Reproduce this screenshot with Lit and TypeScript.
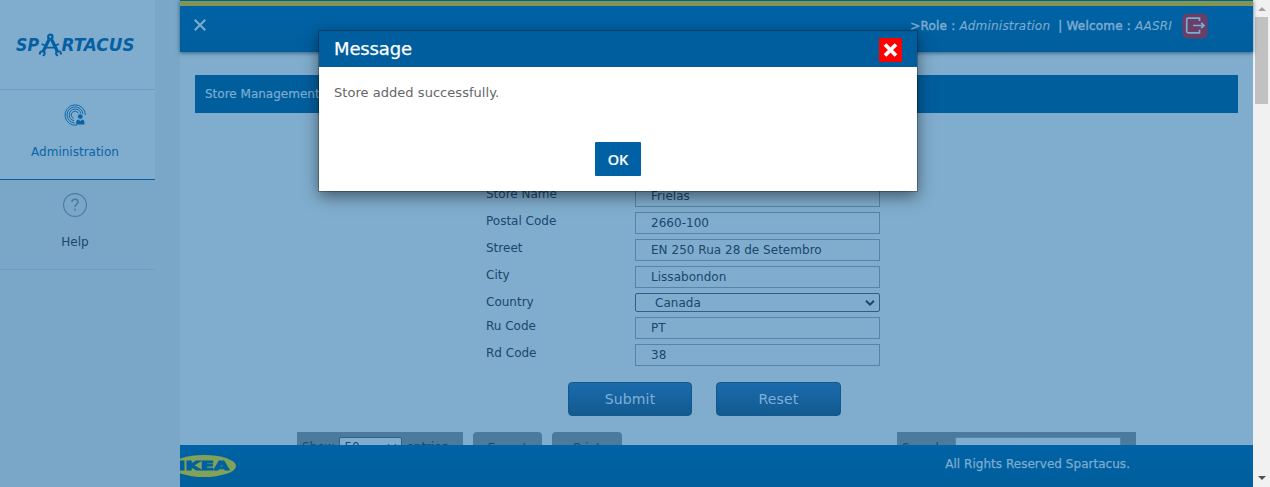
import { LitElement, html, css } from "lit";
import { customElement } from "lit/decorators.js";

type Field = { label: string; value: string; kind?: "select" };

const FIELDS: Field[] = [
  { label: "Store Name", value: "Frielas" },
  { label: "Postal Code", value: "2660-100" },
  { label: "Street", value: "EN 250 Rua 28 de Setembro" },
  { label: "City", value: "Lissabondon" },
  { label: "Country", value: "Canada", kind: "select" },
  { label: "Ru Code", value: "PT" },
  { label: "Rd Code", value: "38" },
];

@customElement("side-nav")
class SideNav extends LitElement {
  static styles = css`
    :host { display: block; width: 180px; background: #7aa7c7; color: #19476d; }
    .inner { width: 155px; }
    .logo { box-sizing: border-box; height: 90px; background: #80adcd; border-bottom: 1px solid #6f9dbf; padding: 31px 0 0 15px; }
    .logo svg { display: block; }
    .item { box-sizing: border-box; height: 90px; display: flex; flex-direction: column; align-items: center; border-bottom: 1px solid #6f9dbf; padding: 13px 5px 0 0; gap: 17px; line-height: 16px; }
    .item svg { display: block; }
    .active { background: #80adcd; color: #0a63a7; border-color: #0560a4; }
    .word { font: italic bold 17px "DejaVu Sans", sans-serif; fill: #0560a3; }
  `;
  render() {
    return html`<div class="inner">
      <div class="logo">
        <svg width="125" height="28" viewBox="0 0 125 28">
          <text class="word" x="1" y="20" textLength="23" lengthAdjust="spacingAndGlyphs">SP</text>
          <text class="word" x="46.5" y="20" textLength="73" lengthAdjust="spacingAndGlyphs">RTACUS</text>
          <g fill="none" stroke="#0560a3">
            <circle cx="35.3" cy="5.8" r="2.2" stroke-width="2.2" />
            <path d="M34 8.5L28.2 20.5M36.6 8.5l5.8 12" stroke-width="3.2" />
            <path d="M30 16.6h11M26.6 13l4 1.6M44 13l-4 1.6" stroke-width="1.8" />
            <path d="M25 23.6q-.8-3 2.4-3.4 3 .4 2.2 2.8l-1.4 2M45.8 23.6q.8-3-2.4-3.4-3 .4-2.2 2.8l1.4 2" stroke-width="2.1" />
          </g>
        </svg>
      </div>
      <div class="item active">
        <svg width="24" height="24" viewBox="0 0 24 24">
          <g fill="none" stroke="#0a63a7" stroke-width=".95">
            <path d="M14 22.1A10.2 10.2 0 1 1 22.4 12" />
            <path d="M11.5 19.9A8 8 0 1 1 20 11" />
            <path d="M11 17.6A5.8 5.8 0 1 1 17.8 10.5" />
            <path d="M10.5 15.3A3.7 3.7 0 1 1 15.4 10.4" />
          </g>
          <circle cx="17.3" cy="13.6" r="2.4" fill="#0a63a7" />
          <path d="M13.2 21.6v-2.5q0-2.2 2.4-2.5l1.7 1.6 1.7-1.6q2.4.3 2.4 2.5v2.5z" fill="#0a63a7" />
        </svg>
        <span>Administration</span>
      </div>
      <div class="item">
        <svg width="24" height="24" viewBox="0 0 24 24" fill="none" stroke="#447ca3">
          <circle cx="12" cy="12" r="11.4" stroke-width="1.1" />
          <path d="M9 9q0-2.8 3-2.8t3 2.7c0 2.2-3 2.4-3 5.1M12 15.7v2" stroke-width="1.5" />
        </svg>
        <span>Help</span>
      </div>
    </div>`;
  }
}

@customElement("store-form")
class StoreForm extends LitElement {
  static styles = css`
    :host { display: block; color: #19476d; }
    .rows { display: flex; flex-direction: column; gap: 5px; padding: 72px 0 0 306px; }
    .row { display: grid; grid-template-columns: 149px 245px; }
    .label { line-height: 19px; height: 19px; }
    .box { box-sizing: border-box; height: 22px; border: 1px solid #5484a7; padding-left: 15px; line-height: 20px; white-space: nowrap; letter-spacing: .03px; }
    .select { height: 19px; border-color: #2c618b; border-radius: 2px; padding: 0 4px 0 19px; line-height: 18px; display: flex; justify-content: space-between; align-items: center; }
    .buttons { display: flex; gap: 24px; padding: 16px 0 0 388px; }
    .button { box-sizing: border-box; width: 124px; height: 34px; border: 1px solid #13578c; border-radius: 4px; background: linear-gradient(#1b6bad, #125a90); color: #7eb0d7; font-size: 14px; letter-spacing: .15px; line-height: 32px; text-align: center; }
    .reset { width: 125px; }
    .tools { display: flex; padding: 16px 0 0 117px; }
    .panel { box-sizing: border-box; height: 34px; background: #4c7a9c; display: flex; padding: 5px; line-height: 20px; }
    .show { width: 166px; }
    .search { width: 239px; margin-left: 275px; }
    .search span { line-height: 22px; }
    .tool { width: 69px; height: 34px; margin-left: 10px; border-radius: 4px; background: #4c7a9c; text-align: center; line-height: 32px; }
    .print { width: 70px; }
    .count { box-sizing: border-box; width: 63px; height: 20px; margin: 0 4px 0 5px; border: 1px solid #2c618b; border-radius: 2px; background: #80adcd; display: flex; align-items: center; justify-content: space-between; padding: 0 4px; }
    .query { box-sizing: border-box; width: 166px; height: 22px; margin-left: auto; margin-right: 10px; border: 1px solid #5484a7; background: #80adcd; }
  `;
  private arrow = () => html`<svg width="10" height="8" viewBox="0 0 10 8" fill="none" stroke="#19476d" stroke-width="2"><path d="M1 1.7l4 4 4-4" /></svg>`;
  render() {
    return html`
      <div class="rows">
        ${FIELDS.map((f) => html`<div class="row">
          <span class="label">${f.label}</span>
          ${f.kind === "select"
            ? html`<div class="box select"><span>${f.value}</span>${this.arrow()}</div>`
            : html`<div class="box">${f.value}</div>`}
        </div>`)}
      </div>
      <div class="buttons"><div class="button">Submit</div><div class="button reset">Reset</div></div>
      <div class="tools">
        <div class="panel show"><span>Show</span><span class="count"><span>50</span>${this.arrow()}</span><span>entries</span></div>
        <div class="tool">Export</div>
        <div class="tool print">Print</div>
        <div class="panel search"><span>Search:</span><span class="query"></span></div>
      </div>`;
  }
}

@customElement("message-dialog")
class MessageDialog extends LitElement {
  static styles = css`
    :host { display: flex; flex-direction: column; width: 598px; height: 160px; background: #fff; box-shadow: 0 0 0 1px rgba(0, 0, 0, .25), 0 5px 15px rgba(0, 0, 0, .5); }
    .head { box-sizing: border-box; height: 36px; background: #005e9e; color: #fff; display: flex; align-items: center; justify-content: space-between; padding: 0 15px; font-size: 18px; letter-spacing: -.15px; -webkit-text-stroke: .25px; }
    .title { margin-top: -1px; }
    .close { width: 23px; height: 24px; background: #f00; display: flex; align-items: center; justify-content: center; margin-top: 1px; }
    .body { height: 75px; box-sizing: border-box; padding: 17px 15px; font-size: 13px; line-height: 17px; letter-spacing: .04px; color: #666; }
    .ok { width: 46px; height: 34px; margin-left: 276px; border-radius: 1px; background: #0062a5; color: #fff; font: 500 14.5px/34px "Noto Sans", sans-serif; -webkit-text-stroke: .2px; text-align: center; }
  `;
  render() {
    return html`
      <div class="head"><span class="title">Message</span>
        <span class="close"><svg width="15" height="14" viewBox="0 0 15 14" stroke="#fff" stroke-width="3.8"><path d="M2 1.5l11 11M13 1.5l-11 11" /></svg></span>
      </div>
      <div class="body">Store added successfully.</div>
      <div class="ok">OK</div>`;
  }
}

@customElement("app-root")
class AppRoot extends LitElement {
  static styles = css`
    :host { display: flex; position: relative; width: 1270px; height: 487px; overflow: hidden; background: #80adcd; font: 12px "DejaVu Sans", Verdana, sans-serif; color: #7cacd0; }
    .main { width: 1073px; display: flex; flex-direction: column; min-width: 0; }
    .top { box-sizing: border-box; height: 52px; flex: none; background: linear-gradient(#0063a6, #005e9d); box-shadow: 0 1px 4px rgba(0, 50, 90, .65); border-top: 1px solid #0060a2; position: relative; }
    .stripe { height: 5px; background: #83964f; }
    .bar { display: flex; align-items: center; height: 38px; padding: 0 45px 0 14px; }
    .bar svg { display: block; }
    .user { margin: 2px 0 0 auto; display: flex; white-space: pre; letter-spacing: .2px; -webkit-text-stroke: .45px; }
    .user i { -webkit-text-stroke: .1px; }
    .out { margin: 2px 0 0 10px; }
    .content { flex: 1; min-height: 0; overflow: hidden; }
    .heading { margin: 23px 15px 0; height: 38px; background: #005e9d; line-height: 38px; padding-left: 10px; -webkit-text-stroke: .2px; }
    .foot { height: 42px; flex: none; background: linear-gradient(#0063a6, #005e9b); display: flex; justify-content: space-between; overflow: hidden; }
    .foot svg { display: block; margin-top: 9px; }
    .rights { padding: 11px 123px 0 0; line-height: 16px; letter-spacing: .03px; -webkit-text-stroke: .25px; }
    .brand { font: bold 12px "DejaVu Sans", sans-serif; fill: #0061a0; stroke: #0061a0; stroke-width: .9px; }
    .scroll { width: 17px; background: #f1f1f1; display: flex; flex-direction: column; align-items: center; }
    .up, .down { width: 0; border: 4px solid transparent; }
    .up { border-top: 0; border-bottom-color: #a3a3a3; margin: 7px 0 6px; }
    .down { border-bottom: 0; border-top-color: #505050; margin: auto 0 7px; }
    .thumb { width: 13px; height: 87px; background: #c1c1c1; }
    .dialog { position: absolute; left: 319px; top: 31px; }
  `;
  render() {
    return html`
      <side-nav></side-nav>
      <div class="main">
        <div class="top">
          <div class="stripe"></div>
          <div class="bar">
            <svg width="12" height="12" viewBox="0 0 12 12" stroke="#7cacd0" stroke-width="2"><path d="M.7.7l10.6 10.6M11.3.7L.7 11.3" /></svg>
            <div class="user"><span>&gt;Role : </span><i>Administration</i><span>  | Welcome : </span><i>AASRI</i></div>
            <svg class="out" width="26" height="26" viewBox="0 0 26 26">
              <rect x=".5" y=".5" width="25" height="25" rx="5" fill="#693e67" />
              <path d="M17.5 8V5.2H6.2q-1.5 0-1.5 1.5v11.6q0 1.5 1.5 1.5h11.3v-3M11 12.5h11M19.2 9.8l2.8 2.7-2.8 2.7" fill="none" stroke="#7cacd0" stroke-width="1.7" />
            </svg>
          </div>
        </div>
        <div class="content">
          <div class="heading">Store Management</div>
          <store-form></store-form>
        </div>
        <div class="foot">
          <svg width="58" height="24" viewBox="0 0 58 24">
            <ellipse cx="24" cy="12" rx="32" ry="11" fill="#82a159" />
            <text class="brand" x="-2" y="16.2" textLength="51" lengthAdjust="spacingAndGlyphs">IKEA</text>
          </svg>
          <span class="rights">All Rights Reserved Spartacus.</span>
        </div>
      </div>
      <div class="scroll"><span class="up"></span><span class="thumb"></span><span class="down"></span></div>
      <message-dialog class="dialog"></message-dialog>`;
  }
}
